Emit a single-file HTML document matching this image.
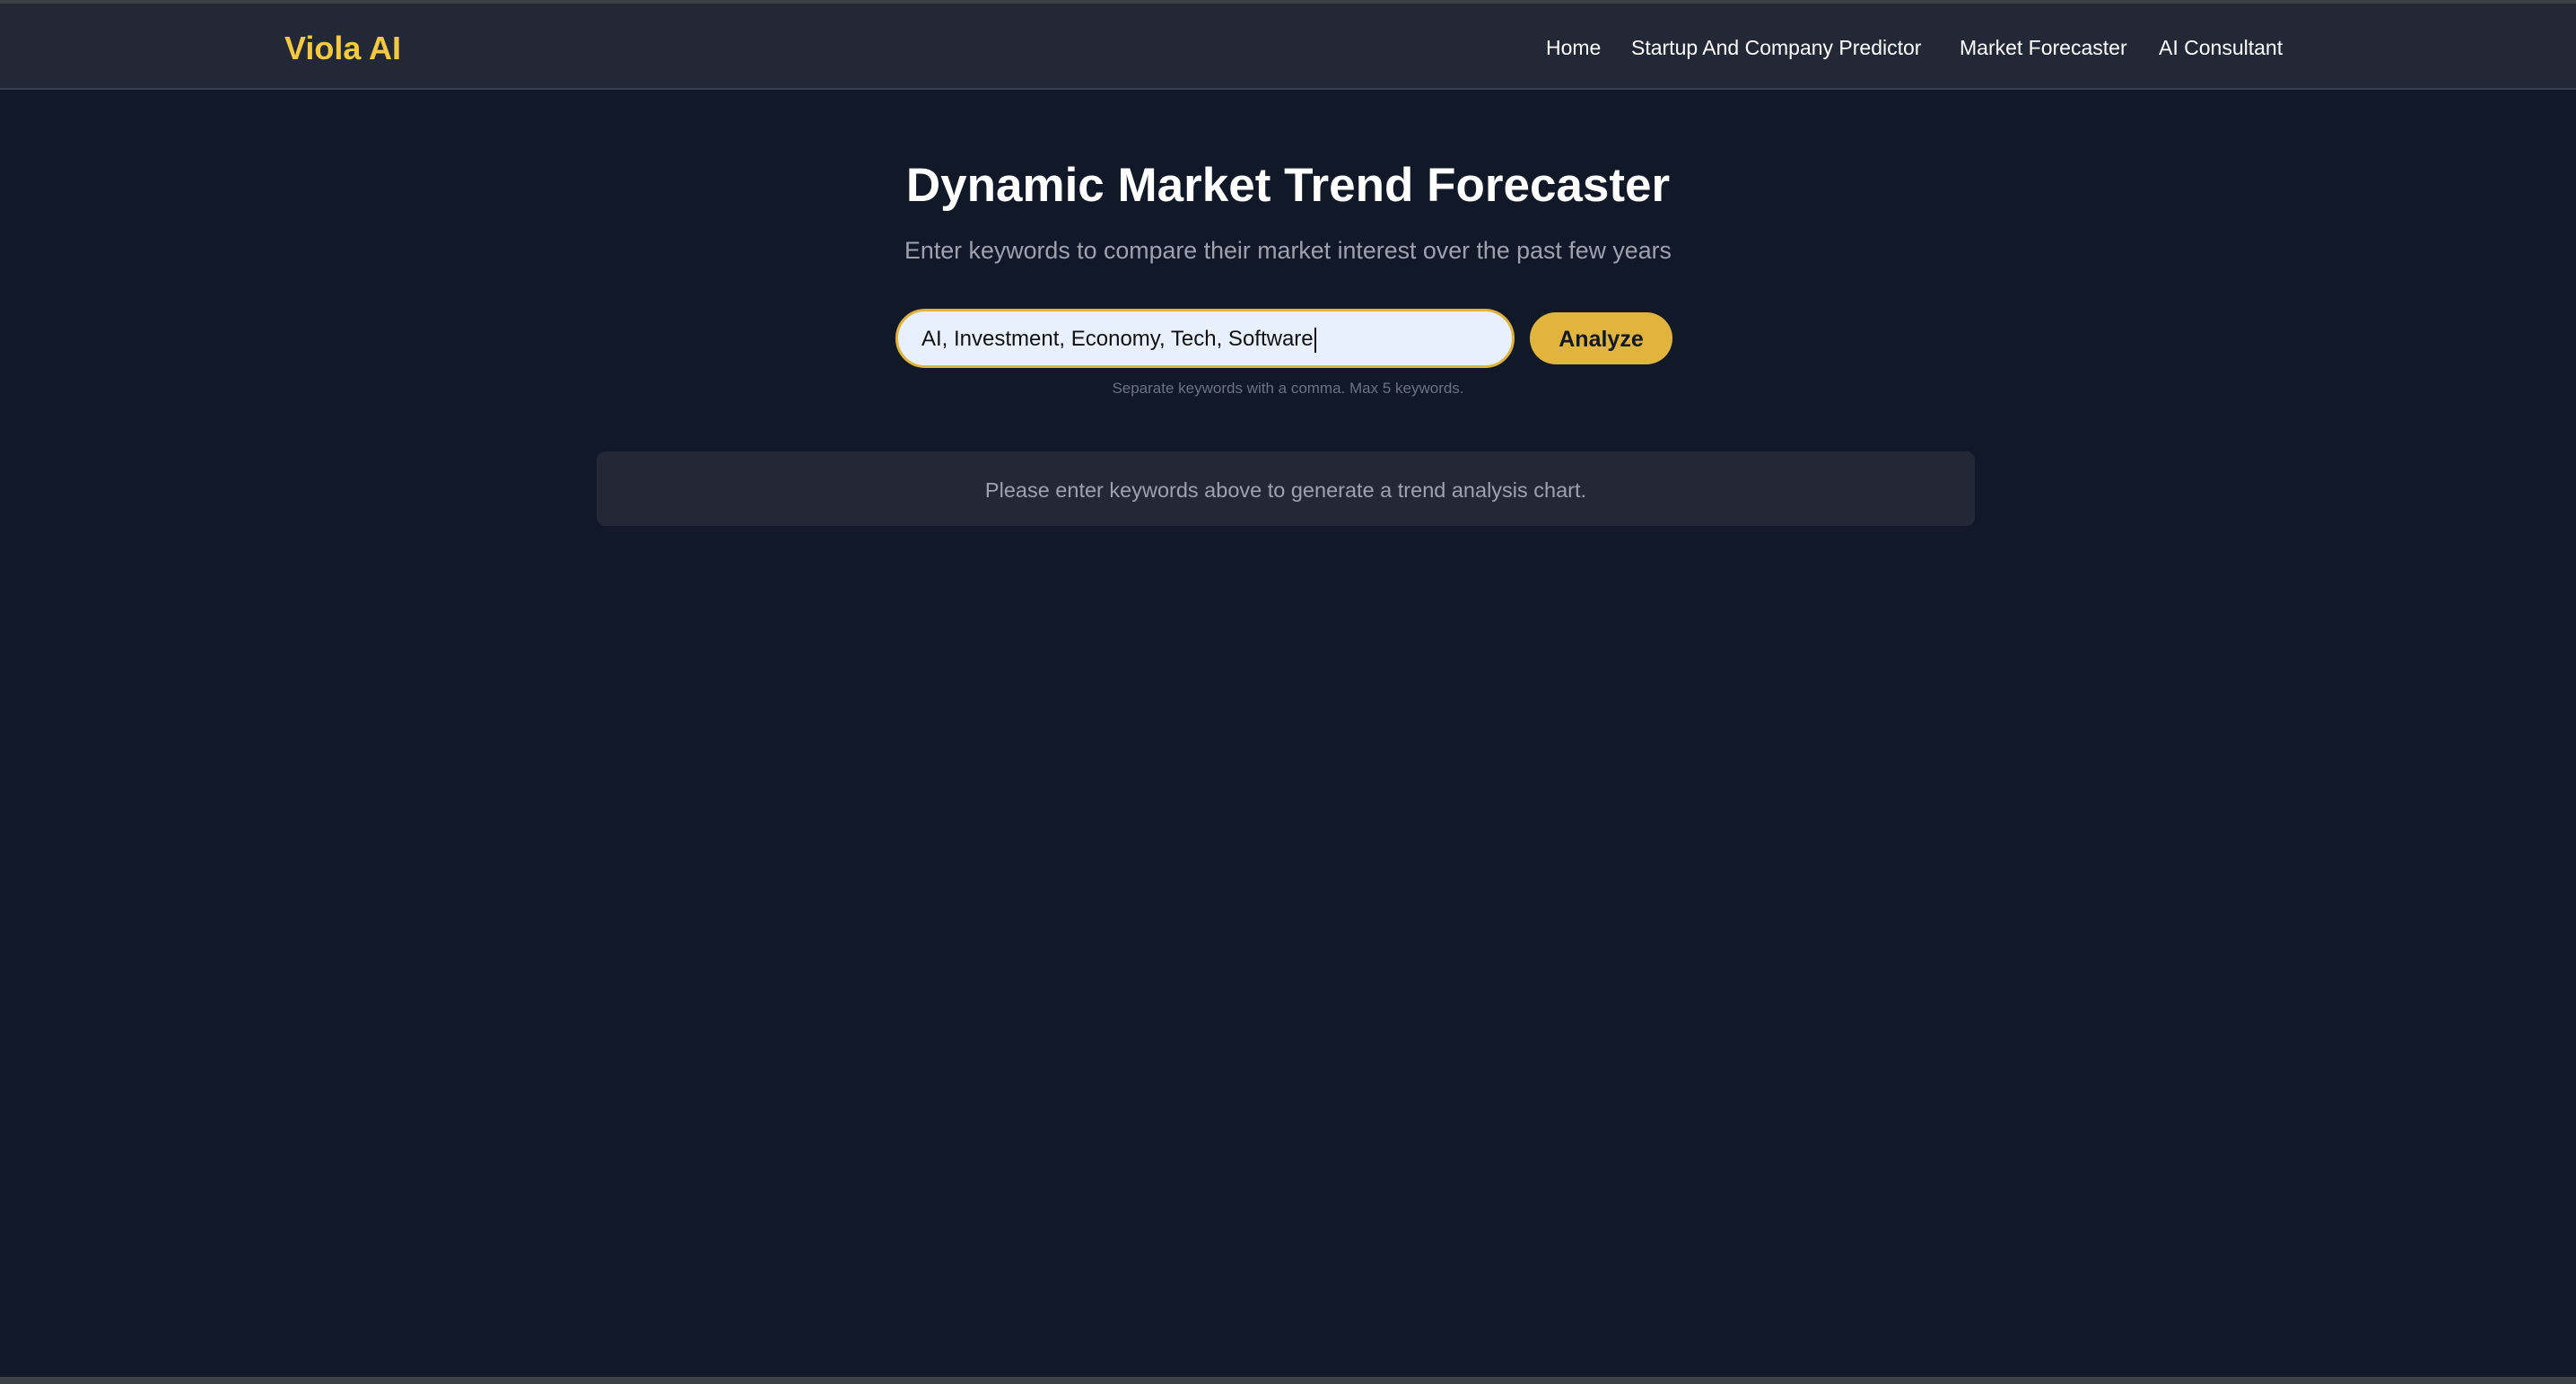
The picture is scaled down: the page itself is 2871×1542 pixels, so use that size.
<!DOCTYPE html>
<html><head><meta charset="utf-8"><style>
*{margin:0;padding:0;box-sizing:border-box}
body{width:2871px;height:1542px;background:#111827;font-family:"Liberation Sans",sans-serif;position:relative;overflow:hidden}
.top{position:absolute;left:0;top:0;width:100%;height:4px;background:#3c4146}
.nav{position:absolute;left:0;top:4px;width:100%;height:96px;background:#222836;border-bottom:2px solid #374151}
.logo{position:absolute;left:317px;top:30px;font-size:36px;font-weight:bold;color:#f5c842;line-height:40px}
.nl{position:absolute;top:35px;font-size:23px;color:#fff;line-height:28px;white-space:nowrap}
h1{position:absolute;left:0;width:100%;top:174px;text-align:center;font-size:53px;color:#fff;line-height:66px}
.sub{position:absolute;left:0;width:100%;top:263px;text-align:center;font-size:26.8px;color:#9ca3af;line-height:32px}
.inp{position:absolute;left:998px;top:344px;width:690px;height:66px;border:3px solid #e0b43c;border-radius:33px;background:#e8f0fe;font-size:24px;color:#111;line-height:62px;padding-left:26px}
.inp span{display:inline-block;width:2px;height:28px;background:#111;vertical-align:middle;margin-left:1px}
.btn{position:absolute;left:1705px;top:348px;width:159px;height:58px;border-radius:29px;background:#e1b43e;font-size:25px;font-weight:bold;color:#111827;text-align:center;line-height:60px}
.hint{position:absolute;left:0;width:100%;top:422px;text-align:center;font-size:17px;color:#6b7280;line-height:22px}
.box{position:absolute;left:665px;top:503px;width:1536px;height:83px;background:#222836;border-radius:10px;text-align:center;line-height:86px;font-size:23.5px;color:#9ca3af}
.bot{position:absolute;left:0;bottom:0;width:100%;height:8px;background:#3c4146}
</style></head><body>
<div class="top"></div>
<div class="nav">
<div class="logo">Viola AI</div>
<div class="nl" style="left:1723px">Home</div>
<div class="nl" style="left:1818px">Startup And Company Predictor</div>
<div class="nl" style="left:2184px">Market Forecaster</div>
<div class="nl" style="left:2406px">AI Consultant</div>
</div>
<h1>Dynamic Market Trend Forecaster</h1>
<div class="sub">Enter keywords to compare their market interest over the past few years</div>
<div class="inp">AI, Investment, Economy, Tech, Software<span></span></div>
<div class="btn">Analyze</div>
<div class="hint">Separate keywords with a comma. Max 5 keywords.</div>
<div class="box">Please enter keywords above to generate a trend analysis chart.</div>
<div class="bot"></div>
</body></html>
